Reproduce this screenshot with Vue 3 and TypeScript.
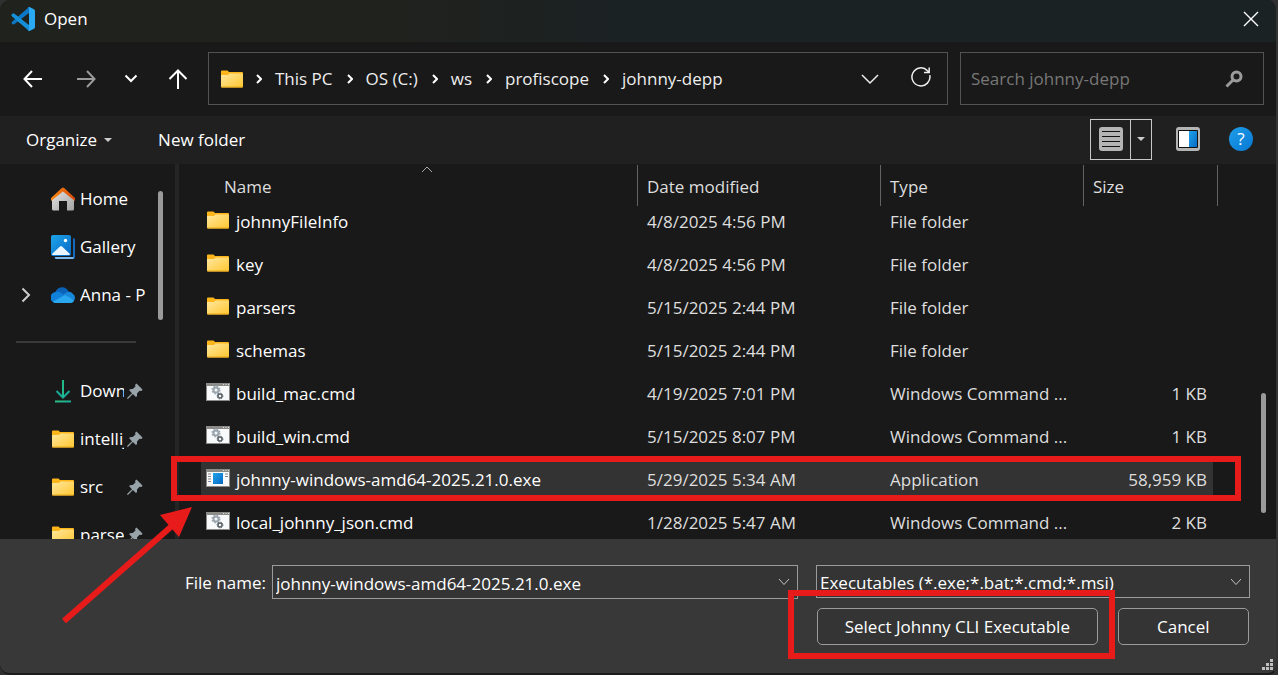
<script setup lang="ts">
import { ref } from 'vue'

type Kind = 'folder' | 'cmd' | 'exe'

interface Entry {
  name: string
  date: string
  type: string
  size: string
  kind: Kind
}

interface Place {
  label: string
  icon: 'home' | 'gallery' | 'cloud' | 'download' | 'folder'
  expandable?: boolean
  pinned?: boolean
}

const crumbs = ['This PC', 'OS (C:)', 'ws', 'profiscope', 'johnny-depp']

const quickPlaces: Place[] = [
  { label: 'Home', icon: 'home' },
  { label: 'Gallery', icon: 'gallery' },
  { label: 'Anna - P', icon: 'cloud', expandable: true },
]

const pinnedPlaces: Place[] = [
  { label: 'Downloads', icon: 'download', pinned: true },
  { label: 'intellij', icon: 'folder', pinned: true },
  { label: 'src', icon: 'folder', pinned: true },
  { label: 'parse', icon: 'folder', pinned: true },
]

const entries: Entry[] = [
  { name: 'johnnyFileInfo', date: '4/8/2025 4:56 PM', type: 'File folder', size: '', kind: 'folder' },
  { name: 'key', date: '4/8/2025 4:56 PM', type: 'File folder', size: '', kind: 'folder' },
  { name: 'parsers', date: '5/15/2025 2:44 PM', type: 'File folder', size: '', kind: 'folder' },
  { name: 'schemas', date: '5/15/2025 2:44 PM', type: 'File folder', size: '', kind: 'folder' },
  { name: 'build_mac.cmd', date: '4/19/2025 7:01 PM', type: 'Windows Command ...', size: '1 KB', kind: 'cmd' },
  { name: 'build_win.cmd', date: '5/15/2025 8:07 PM', type: 'Windows Command ...', size: '1 KB', kind: 'cmd' },
  { name: 'johnny-windows-amd64-2025.21.0.exe', date: '5/29/2025 5:34 AM', type: 'Application', size: '58,959 KB', kind: 'exe' },
  { name: 'local_johnny_json.cmd', date: '1/28/2025 5:47 AM', type: 'Windows Command ...', size: '2 KB', kind: 'cmd' },
]

const selected = ref('johnny-windows-amd64-2025.21.0.exe')
const fileName = ref('johnny-windows-amd64-2025.21.0.exe')
const search = ref('')
const filter = ref('exe')
</script>

<template>
  <div class="dialog">
    <svg class="defs" aria-hidden="true">
      <defs>
        <linearGradient id="g-folder" x1="0" y1="0" x2="1" y2="1">
          <stop offset="0" stop-color="#ffe8a0" />
          <stop offset="1" stop-color="#ffc62f" />
        </linearGradient>
        <linearGradient id="g-blue" x1="0" y1="0" x2="1" y2="1">
          <stop offset="0" stop-color="#1fa4ea" />
          <stop offset="1" stop-color="#0669c4" />
        </linearGradient>
        <linearGradient id="g-roof" x1="0" y1="0" x2="1" y2="0">
          <stop offset="0" stop-color="#fb8c14" />
          <stop offset="1" stop-color="#d9480b" />
        </linearGradient>
        <linearGradient id="g-wall" x1="0" y1="0" x2="1" y2="1">
          <stop offset="0" stop-color="#e6e6e6" />
          <stop offset="1" stop-color="#a3a3a3" />
        </linearGradient>
        <linearGradient id="g-down" x1="0" y1="0" x2="1" y2="1">
          <stop offset="0" stop-color="#37c878" />
          <stop offset="1" stop-color="#11a3a0" />
        </linearGradient>
        <symbol id="i-folder" viewBox="0 0 22 18">
          <path d="M0 1.500Q0 .5 1 .5H6.500L8 2H21Q22 2 22 3V8H0Z" fill="#fdb51c" />
          <path d="M0 5H7L8.500 3.500H21Q22 3.500 22 4.500V16.500Q22 17.500 21 17.500H1Q0 17.500 0 16.500Z" fill="url(#g-folder)" />
          <path d="M0 16.500H22Q22 17.500 21 17.500H1Q0 17.500 0 16.500Z" fill="#e9a818" />
        </symbol>
        <symbol id="i-cmd" viewBox="0 0 24 18">
          <rect width="24" height="18" fill="#8b8b88" />
          <rect x="1" y="3" width="22" height="14" fill="#f8f9fa" />
          <path d="M17 1.500h1M19.500 1.500h1M22 1.500h1" stroke="#ddd" />
          <circle cx="10" cy="7" r="2.500" fill="none" stroke="#9aa5ae" stroke-width="2" />
          <circle cx="10" cy="7" r="3.800" fill="none" stroke="#9aa5ae" stroke-width="1.500" stroke-dasharray="1.500 1.500" />
          <circle cx="14" cy="13" r="2" fill="none" stroke="#596268" stroke-width="1.500" />
          <circle cx="14" cy="13" r="2.900" fill="none" stroke="#596268" stroke-width="1" stroke-dasharray="1.200 1.100" />
        </symbol>
        <symbol id="i-exe" viewBox="0 0 24 18">
          <rect width="24" height="18" fill="#8b8b88" />
          <rect x="1" y="3" width="22" height="14" fill="#f8f9fa" />
          <path d="M17 1.500h1M19.500 1.500h1M22 1.500h1" stroke="#ddd" />
          <path d="M2 5h3M2 7.500h3M2 10h3M2 12.500h3M19 5h3M19 7.500h3" stroke="#858b90" />
          <rect x="7" y="4" width="10" height="11" fill="url(#g-blue)" />
        </symbol>
        <symbol id="i-home" viewBox="0 0 24 24">
          <path d="M1 11L12 2L23 11V22Q23 23.500 21.500 23.500H16V14H8V23.500H2.500Q1 23.500 1 22Z" fill="url(#g-wall)" />
          <path d="M0 11L10.800 1Q12 0 13.200 1L24 11V14L12 4.500L0 14Z" fill="url(#g-roof)" />
        </symbol>
        <symbol id="i-gallery" viewBox="0 0 24 24">
          <path d="M22 3Q24 3 24 5V22Q24 24 22 24H5Q3.500 24 3.500 22H22Z" fill="#1669bd" />
          <path d="M4 22H22.500V24H5Q4 24 4 22Z" fill="#79b8ee" />
          <rect width="21" height="22" rx="2" fill="#191919" />
          <rect width="20" height="21" rx="2" fill="url(#g-blue)" />
          <path d="M1 19L9 11.500Q10 10.500 11 11.500L19 19Q19 20 17.500 20H2Q1 20 1 19Z" fill="#eaf5ff" />
          <circle cx="14.500" cy="5.500" r="1.700" fill="#fff" />
        </symbol>
        <symbol id="i-cloud" viewBox="0 0 24 16">
          <path d="M4 6C6-1 15-2 18 5L22 8L12 12L3 9Z" fill="#0b62b8" />
          <path d="M5 16A5 5 0 0 1 5 5Q10 4 13 9L10 14Z" fill="#1180d8" />
          <path d="M12 8Q18 2 22 7Q24 8 24 11Q23 16 19 16L10 14Z" fill="#1787d9" />
          <path d="M2 14.500L14 8Q19 10 23 14Q21.500 16 19 16H5Q3 16 2 14.500Z" fill="#2aa7ee" />
        </symbol>
        <symbol id="i-download" viewBox="0 0 24 24">
          <path d="M5.500 12L12 18.500L18.500 12" fill="none" stroke="#18ab9a" stroke-width="2" />
          <path d="M11 1h2v17h-2z" fill="#24b98a" />
          <path d="M4 21.500h16v2H4z" fill="url(#g-down)" />
        </symbol>
        <symbol id="i-pin" viewBox="0 0 16 16">
          <path d="M9.500 .5L15.500 6.500L14.500 8L12.500 7.800L10 10.500Q10.500 13 9 14L5.800 11L1.500 15.500L0 16L.5 14.500L5 10.200L2 7Q3.500 5.500 5.800 6L8.500 3.500L8 2Z" fill="#98a3aa" />
        </symbol>
      </defs>
    </svg>

    <header class="titlebar">
      <svg class="logo" viewBox="0 0 24 24" aria-hidden="true">
        <path d="M1 7.200Q2 6 3.200 6.700L18 18V24L.8 9Q.2 8 1 7.200Z" fill="#1590d8" />
        <path d="M1 16.800Q2 18 3.200 17.300L18 6V0L.8 15Q.2 16 1 16.800Z" fill="#0a78c6" />
        <path d="M1 7.200Q2 6 3.200 6.700L12 13.500L9 16.200L.8 9Q.2 8 1 7.200Z" fill="#1590d8" />
        <path d="M17 .2Q18 -.2 19 .3L23 2.200Q24 2.700 24 4V20Q24 21.300 23 21.800L19 23.700Q18 24.200 17 23.800Q18 23.500 18 22V2Q18 .5 17 .2Z" fill="#2aaaf3" />
      </svg>
      <h1>Open</h1>
      <button class="close line" type="button" aria-label="Close">
        <svg width="16" height="16" viewBox="0 0 16 16"><path d="M1 1L15 15M15 1L1 15" /></svg>
      </button>
    </header>

    <nav class="navbar">
      <div class="history line">
        <button type="button" aria-label="Back">
          <svg width="20" height="20" viewBox="0 0 20 20"><path d="M1.500 10H19M9 2L1.500 10L9 18" /></svg>
        </button>
        <button type="button" aria-label="Forward" class="dim">
          <svg width="20" height="20" viewBox="0 0 20 20"><path d="M1 10H18.500M11 2L18.500 10L11 18" /></svg>
        </button>
        <button type="button" aria-label="Recent locations" class="narrow">
          <svg width="14" height="20" viewBox="0 0 14 20"><path d="M1.500 6.500L7 12L12.500 6.500" /></svg>
        </button>
        <button type="button" aria-label="Up">
          <svg width="20" height="20" viewBox="0 0 20 20"><path d="M10 20V1.500M1.500 10L10 1.500L18.500 10" /></svg>
        </button>
      </div>
      <div class="address">
        <svg class="folder"><use href="#i-folder" /></svg>
        <template v-for="c in crumbs" :key="c">
          <svg class="sep line" viewBox="0 0 6 10"><path d="M1 1L5 5L1 9" /></svg>
          <a href="#">{{ c }}</a>
        </template>
        <button type="button" class="history-toggle line" aria-label="Previous locations">
          <svg width="18" height="12" viewBox="0 0 18 12"><path d="M1 2L9 10L17 2" /></svg>
        </button>
        <button type="button" class="refresh line" aria-label="Refresh">
          <svg width="20" height="20" viewBox="0 0 20 20"><path d="M18.800 8.200A9 9 0 1 1 16.500 3.700L18 5M18.200 .5V5.500H13" /></svg>
        </button>
      </div>
      <label class="search">
        <input v-model="search" type="text" placeholder="Search johnny-depp" aria-label="Search johnny-depp" />
        <svg width="18" height="18" viewBox="0 0 18 18" aria-hidden="true">
          <circle cx="11.500" cy="6.500" r="4.500" />
          <path d="M8 10L1.500 16.500" />
        </svg>
      </label>
    </nav>

    <div class="toolbar">
      <button type="button" class="text organize">Organize <i class="caret"></i></button>
      <button type="button" class="text">New folder</button>
      <div class="view-split">
        <button type="button" class="view" aria-label="Details view">
          <svg width="24" height="24" viewBox="0 0 24 24">
            <rect width="24" height="24" rx="3" fill="#b4b4b4" />
            <path d="M3 4.500H21M3 9.500H21M3 14.500H21M3 19.500H21" stroke="#111" />
          </svg>
        </button>
        <button type="button" class="view-more" aria-label="More views"><i class="caret"></i></button>
      </div>
      <button type="button" class="preview" aria-label="Preview pane">
        <svg width="24" height="24" viewBox="0 0 24 24">
          <rect width="24" height="24" rx="3" fill="#b4b4b4" />
          <rect x="2" y="3" width="20" height="18" rx="1" fill="#111" />
          <rect x="3" y="4" width="10" height="16" fill="#fff" />
          <rect x="13" y="4" width="8" height="16" fill="url(#g-blue)" />
        </svg>
      </button>
      <button type="button" class="help" aria-label="Help">?</button>
    </div>

    <main class="browser">
      <aside class="places">
        <ul>
          <li v-for="p in quickPlaces" :key="p.label">
            <span class="twist line"><svg v-if="p.expandable" width="10" height="16" viewBox="0 0 10 16"><path d="M1.500 1.500L8 8L1.500 14.500" /></svg></span>
            <svg class="picto" :class="p.icon"><use :href="'#i-' + p.icon" /></svg>
            <span class="label">{{ p.label }}</span>
          </li>
        </ul>
        <hr />
        <ul>
          <li v-for="p in pinnedPlaces" :key="p.label">
            <span class="twist"></span>
            <svg class="picto" :class="p.icon"><use :href="'#i-' + p.icon" /></svg>
            <span class="label">{{ p.label }}</span>
            <svg class="pin"><use href="#i-pin" /></svg>
          </li>
        </ul>
      </aside>
      <div class="places-scroll"><div class="thumb"></div></div>

      <section class="files">
        <table>
          <colgroup>
            <col />
            <col class="c-date" />
            <col class="c-type" />
            <col class="c-size" />
          </colgroup>
          <thead>
            <tr>
              <th class="name">Name
                <svg class="sort line" width="12" height="7" viewBox="0 0 12 7"><path d="M1 6L6 1L11 6" /></svg>
              </th>
              <th>Date modified</th>
              <th>Type</th>
              <th>Size</th>
            </tr>
          </thead>
          <tbody>
            <tr v-for="e in entries" :key="e.name" :class="{ selected: e.name === selected }" @click="selected = e.name">
              <td class="name">
                <div class="cell">
                  <svg :class="e.kind === 'folder' ? 'folder' : 'file'"><use :href="'#i-' + e.kind" /></svg>
                  <span>{{ e.name }}</span>
                </div>
              </td>
              <td>{{ e.date }}</td>
              <td>{{ e.type }}</td>
              <td class="size">{{ e.size }}</td>
            </tr>
          </tbody>
        </table>
      </section>
      <div class="files-scroll"><div class="thumb"></div></div>
    </main>

    <footer class="footer">
      <label for="filename">File name:</label>
      <div class="combo line">
        <input id="filename" v-model="fileName" type="text" />
        <svg width="12" height="8" viewBox="0 0 12 8"><path d="M1 1L6 6.500L11 1" /></svg>
      </div>
      <div class="combo type line">
        <select v-model="filter" aria-label="File type">
          <option value="exe">Executables (*.exe;*.bat;*.cmd;*.msi)</option>
        </select>
        <svg width="12" height="8" viewBox="0 0 12 8"><path d="M1 1L6 6.500L11 1" /></svg>
      </div>
      <div class="actions">
        <div class="primary">
          <button type="button">Select Johnny CLI Executable</button>
          <div class="mark button-mark"></div>
        </div>
        <button type="button" class="cancel">Cancel</button>
      </div>
      <svg class="grip" width="11" height="11" viewBox="0 0 11 11" aria-hidden="true">
        <path d="M8 0h3v3H8zM4 4h3v3H4zM8 4h3v3H8zM0 8h3v3H0zM4 8h3v3H4zM8 8h3v3H8z" />
      </svg>
    </footer>

    <div class="mark row-mark"></div>
    <svg class="arrow" width="132" height="120" viewBox="0 0 132 120" aria-hidden="true">
      <path d="M3 116L112 20" fill="none" stroke="#e81b1b" stroke-width="6" />
      <path d="M131 2L99 10L118 32Z" fill="#e81b1b" />
    </svg>
  </div>
</template>

<style>
html, body { margin: 0; background: #303030; }
</style>

<style scoped>
* { box-sizing: border-box; }
.dialog {
  position: relative;
  display: flex;
  flex-direction: column;
  height: 100vh;
  border-right: 2px solid #343434;
  border-bottom: 2px solid #1c1c1c;
  border-radius: 10px;
  overflow: hidden;
  background: #191919;
  color: #fff;
  font: 17px/24px "Open Sans", "Noto Sans", sans-serif;
}
.defs { position: absolute; width: 0; height: 0; }
button, input, select { font: inherit; color: inherit; margin: 0; }
button { background: none; border: 0; padding: 0; display: flex; align-items: center; justify-content: center; }
svg { flex: none; display: block; }
.line path { fill: none; }
ul { list-style: none; margin: 0; padding: 0; }

.titlebar {
  flex: none;
  height: 42px;
  display: flex;
  align-items: center;
  padding: 0 16px 4px 11px;
  background: linear-gradient(90deg, #20221d 0%, #20221d 30%, #1b2224 50%, #1b2224 100%);
}
.logo { width: 24px; height: 24px; }
.titlebar h1 { margin: 0 0 0 9px; font-size: 17px; font-weight: 400; }
.close { margin-left: auto; width: 18px; height: 18px; }
.close path { stroke: #fff; stroke-width: 1.4; }

.navbar { flex: none; height: 74px; display: flex; padding: 10px 12px 11px 23px; }
.history { width: 185px; display: flex; gap: 33px; align-items: center; }
.history button { width: 20px; }
.history .narrow { width: 14px; margin-left: -5px; }
.history .narrow + button { margin-left: -3px; }
.history path { stroke: #fff; stroke-width: 2; }
.history .dim path { stroke: #9a9a9a; }
.address {
  flex: 1;
  display: flex;
  align-items: center;
  border: 1px solid #535353;
  padding: 0 16px 0 12px;
}
.folder { width: 22px; height: 18px; }
.address .sep { width: 6px; height: 10px; margin: 0 13px; }
.address a + .sep { margin-left: 14px; }
.address .sep path { stroke: #fff; stroke-width: 2; }
.address a { color: #eee; text-decoration: none; white-space: nowrap; }
.address button path { stroke: #eee; stroke-width: 1.5; }
.history-toggle { margin: 0 32px 0 auto; }
.refresh { padding-bottom: 3px; }
.search {
  width: 304px;
  margin-left: 12px;
  display: flex;
  align-items: center;
  border: 1px solid #535353;
  padding: 0 20px 0 10px;
}
.search input { flex: 1; min-width: 0; border: 0; outline: 0; padding: 0; background: none; }
.search input::placeholder { color: #777; opacity: 1; }
.search svg * { fill: none; stroke: #9b9b9b; stroke-width: 3; }

.toolbar {
  flex: none;
  height: 48px;
  display: flex;
  align-items: center;
  padding: 0 23px 2px 26px;
  background: #202020;
}
.toolbar .text { padding-top: 2px; }
.organize { margin-right: 46px; }
.caret { border: 4px solid transparent; border-top-color: #ccc; border-bottom: 0; }
.organize .caret { margin-left: 7px; }
.view-split { margin-left: auto; display: flex; height: 41px; border: 1px solid #c8c8c8; }
.view { width: 40px; border-right: 1px solid #c8c8c8; }
.view-more { width: 20px; }
.preview { margin-left: 24px; }
.help {
  margin-left: 29px;
  width: 24px;
  height: 24px;
  border-radius: 50%;
  background: linear-gradient(135deg, #1e9de8, #0878d4);
}

.browser { flex: 1; min-height: 0; display: flex; background: #191919; }
.places { width: 147px; padding: 11px 0 0 16px; overflow: hidden; }
.places li { height: 48px; display: flex; align-items: center; }
.twist { flex: none; width: 35px; padding-left: 5px; }
.twist path { stroke: #ccc; stroke-width: 2; }
.picto { width: 24px; height: 24px; }
.picto.folder { height: 18px; }
.picto.cloud { height: 16px; }
.label { flex: 1; min-width: 0; margin-left: 5px; white-space: nowrap; overflow: hidden; }
.pin { width: 16px; height: 16px; margin: 0 4px 0 3px; }
.places hr { height: 2px; margin: 22px 11px 24px 0; border: 0; background: #3a3a3a; }
.places-scroll { width: 32px; padding: 27px 0 0 11px; border-right: 4px solid #252525; }
.thumb { width: 5px; border-radius: 3px; background: #9a9a9a; }
.places-scroll .thumb { height: 129px; }
.files { flex: 1; min-width: 0; padding-left: 22px; overflow: hidden; }
.files-scroll { width: 58px; padding: 229px 0 0 43px; }
.files-scroll .thumb { height: 120px; }

table { width: 100%; table-layout: fixed; border-collapse: collapse; color: #dedede; }
.c-date { width: 243px; }
.c-type { width: 203px; }
.c-size { width: 135px; }
th {
  position: relative;
  height: 36px;
  padding: 11px 0 0 10px;
  text-align: left;
  font-weight: 400;
  vertical-align: top;
}
th::after { content: ""; position: absolute; top: 1px; right: -1px; width: 1px; height: 41px; background: #636363; }
th:last-child::after { right: 0; }
th.name { padding-left: 23px; }
.sort { position: absolute; top: 2px; left: 50%; margin-left: 2px; }
.sort path { stroke: #a8a8a8; }
td { height: 43px; padding: 0 0 0 10px; white-space: nowrap; }
td.name { padding-left: 5px; color: #fff; }
.cell { display: flex; align-items: center; }
.cell svg { width: 24px; height: 18px; margin-right: 6px; margin-bottom: 4px; }
td.size { text-align: right; padding-right: 11px; }
tr.selected { background: linear-gradient(#333, #333) 0 0 / calc(100% - 5px) 100% no-repeat; }

.footer {
  position: relative;
  flex: none;
  display: grid;
  grid-template-columns: 79px minmax(0, 526fr) minmax(0, 444fr);
  column-gap: 8px;
  row-gap: 9px;
  align-items: start;
  padding: 26px 26px 28px 185px;
  background: #383838;
}
.footer label { line-height: 36px; height: 34px; white-space: nowrap; }
.combo { position: relative; height: 34px; display: flex; border: 1px solid #9b9b9b; background: #343434; }
.combo.type { margin-left: 10px; height: 33px; }
.combo input, .combo select { flex: 1; min-width: 0; border: 0; outline: 0; background: none; padding: 3px 24px 0 3px; appearance: none; }
.combo svg { position: absolute; right: 7px; top: 12px; }
.combo path { stroke: #c4c4c4; }
.actions { grid-column: 3; display: flex; margin-left: 11px; gap: 20px; margin-right: 1px; }
.primary { position: relative; flex: 282; }
.actions button { height: 37px; width: 100%; border: 1px solid #9b9b9b; border-radius: 5px; background: #343434; white-space: nowrap; }
.actions .cancel { flex: 130; width: auto; }
.grip { position: absolute; right: 3px; bottom: 3px; }
.grip path { fill: #c0c0c0; }

.mark { position: absolute; border: 6px solid #e81b1b; pointer-events: none; }
.button-mark { inset: -18px -17px -14px -29px; }
.row-mark { left: 171px; right: 35px; top: 456px; height: 45px; }
.arrow { position: absolute; left: 61px; top: 505px; pointer-events: none; }
</style>
